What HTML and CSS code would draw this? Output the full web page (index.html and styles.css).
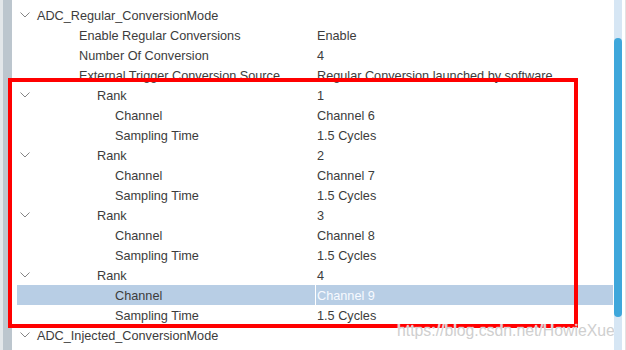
FILE: index.html
```html
<!DOCTYPE html>
<html lang="en">
<head>
<meta charset="UTF-8">
<meta name="viewport" content="width=device-width, initial-scale=1.0">
<title>ADC Parameter Settings</title>
<link rel="stylesheet" href="styles.css">
</head>
<body>
<div class="window">
    <div class="gutter"></div>
    <div class="tree">
        <div class="row">
            <div class="name"><span class="toggle"><svg class="chev" width="10" height="6" viewBox="0 0 10 6"><polyline points="0.5,0.5 5,5 9.5,0.5"/></svg></span><span class="label">ADC_Regular_ConversionMode</span></div>
            <div class="value"></div>
        </div>
        <div class="row">
            <div class="name"><span class="toggle"></span><span class="label prop">Enable Regular Conversions</span></div>
            <div class="value">Enable</div>
        </div>
        <div class="row">
            <div class="name"><span class="toggle"></span><span class="label prop">Number Of Conversion</span></div>
            <div class="value">4</div>
        </div>
        <div class="row">
            <div class="name"><span class="toggle"></span><span class="label prop">External Trigger Conversion Source</span></div>
            <div class="value">Regular Conversion launched by software</div>
        </div>

        <div class="row">
            <div class="name"><span class="toggle"><svg class="chev" width="10" height="6" viewBox="0 0 10 6"><polyline points="0.5,0.5 5,5 9.5,0.5"/></svg></span><span class="label rank">Rank</span></div>
            <div class="value">1</div>
        </div>
        <div class="row">
            <div class="name"><span class="toggle"></span><span class="label child">Channel</span></div>
            <div class="value">Channel 6</div>
        </div>
        <div class="row">
            <div class="name"><span class="toggle"></span><span class="label child">Sampling Time</span></div>
            <div class="value">1.5 Cycles</div>
        </div>

        <div class="row">
            <div class="name"><span class="toggle"><svg class="chev" width="10" height="6" viewBox="0 0 10 6"><polyline points="0.5,0.5 5,5 9.5,0.5"/></svg></span><span class="label rank">Rank</span></div>
            <div class="value">2</div>
        </div>
        <div class="row">
            <div class="name"><span class="toggle"></span><span class="label child">Channel</span></div>
            <div class="value">Channel 7</div>
        </div>
        <div class="row">
            <div class="name"><span class="toggle"></span><span class="label child">Sampling Time</span></div>
            <div class="value">1.5 Cycles</div>
        </div>

        <div class="row">
            <div class="name"><span class="toggle"><svg class="chev" width="10" height="6" viewBox="0 0 10 6"><polyline points="0.5,0.5 5,5 9.5,0.5"/></svg></span><span class="label rank">Rank</span></div>
            <div class="value">3</div>
        </div>
        <div class="row">
            <div class="name"><span class="toggle"></span><span class="label child">Channel</span></div>
            <div class="value">Channel 8</div>
        </div>
        <div class="row">
            <div class="name"><span class="toggle"></span><span class="label child">Sampling Time</span></div>
            <div class="value">1.5 Cycles</div>
        </div>

        <div class="row">
            <div class="name"><span class="toggle"><svg class="chev" width="10" height="6" viewBox="0 0 10 6"><polyline points="0.5,0.5 5,5 9.5,0.5"/></svg></span><span class="label rank">Rank</span></div>
            <div class="value">4</div>
        </div>
        <div class="row selected">
            <div class="name"><span class="toggle"></span><span class="label child">Channel</span></div>
            <div class="value">Channel 9</div>
        </div>
        <div class="row">
            <div class="name"><span class="toggle"></span><span class="label child">Sampling Time</span></div>
            <div class="value">1.5 Cycles</div>
        </div>

        <div class="row">
            <div class="name"><span class="toggle"><svg class="chev" width="10" height="6" viewBox="0 0 10 6"><polyline points="0.5,0.5 5,5 9.5,0.5"/></svg></span><span class="label">ADC_Injected_ConversionMode</span></div>
            <div class="value"></div>
        </div>
    </div>
    <div class="scrollbar"><div class="thumb"></div></div>
    <div class="edge"></div>
</div>

<div class="callout"></div>
<div class="watermark">https://blog.csdn.net/HowieXue</div>
</body>
</html>
```

FILE: styles.css
```css
body {
    margin: 0;
    padding: 0;
    background-color: white;
    font-family: "Liberation Sans", Arial, sans-serif;
    font-size: 12.7px;
    color: #3c3c3c;
    overflow: hidden;
}

.window {
    display: flex;
    width: 626px;
    height: 350px;
    overflow: hidden;
}

.gutter {
    flex: none;
    width: 9px;
    border-left: 3px solid #e3e7ea;
    background-color: #bcc6ce;
}

.tree {
    flex: none;
    width: 596px;
    padding: 5px 1px 0 5px;
}

.row {
    display: grid;
    grid-template-columns: 298px 297px;
    column-gap: 1px;
    height: 20px;
    white-space: nowrap;
}

.name {
    display: flex;
    align-items: center;
}

.label,
.value {
    line-height: 22px;
    height: 20px;
}

.toggle {
    flex: none;
    width: 17px;
    padding-left: 3px;
    display: flex;
    align-items: center;
}

.chev {
    fill: none;
    stroke: #858585;
    stroke-width: 1;
}

.label.prop {
    padding-left: 42px;
}

.label.rank {
    padding-left: 60px;
}

.label.child {
    padding-left: 78px;
}

.value {
    padding-left: 1px;
}

.row.selected .name,
.row.selected .value {
    background-color: #b8cee5;
}

.row.selected .value {
    color: #f7faff;
}

.scrollbar {
    flex: none;
    width: 8px;
    background-color: #d6e6f4;
}

.thumb {
    margin-top: 38px;
    height: 279px;
    border-radius: 4px;
    background-color: #3ea7db;
}

.edge {
    flex: none;
    width: 3px;
    border-right: 1px solid #e2e2e2;
}

.callout {
    position: absolute;
    left: 8px;
    top: 78px;
    width: 570px;
    height: 250px;
    box-sizing: border-box;
    border: 4px solid #ff0000;
}

.watermark {
    position: absolute;
    left: 397px;
    top: 323px;
    font-size: 15.8px;
    line-height: 16px;
    color: #cfcfcf;
    text-shadow: 0 0 1px white, 0 0 1px white;
    white-space: nowrap;
}
```
